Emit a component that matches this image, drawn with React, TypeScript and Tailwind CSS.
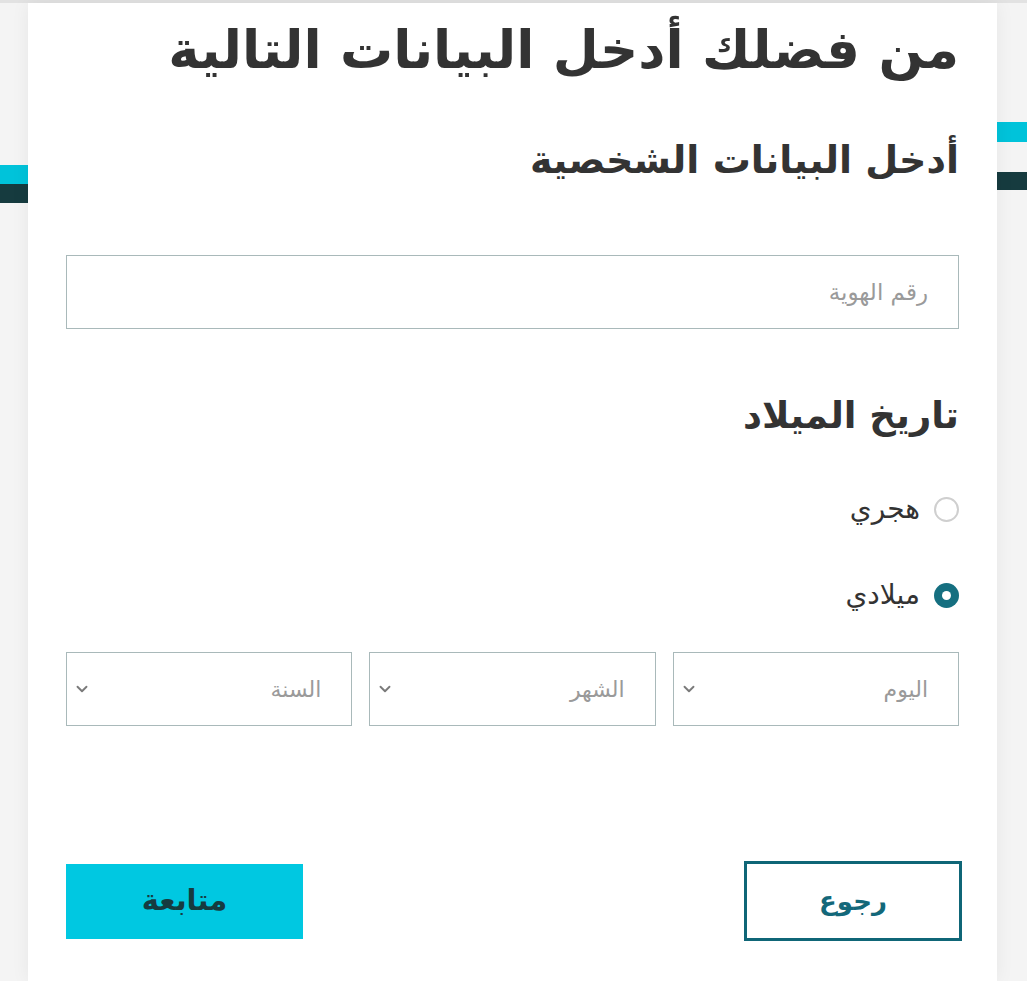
import { ChevronDown } from 'lucide-react';

const font = { fontFamily: '"DejaVu Sans", "Noto Sans", sans-serif' };

function DateSelect({ label }: { label: string }) {
  return (
    <div className="relative h-[74px] flex-1 border border-[#a9b9ba] bg-white">
      <div className="flex h-full items-center justify-between pl-[6px] pr-[30px]">
        <span className="text-[22px] text-[#9a9a9a]">{label}</span>
        <ChevronDown size={18} strokeWidth={2.5} className="text-[#7a7a7a]" />
      </div>
    </div>
  );
}

function Radio({ label, checked }: { label: string; checked?: boolean }) {
  return (
    <label className="flex h-[36px] items-center gap-[14px]">
      {checked ? (
        <span className="flex h-[25px] w-[25px] items-center justify-center rounded-full bg-[#156f80]">
          <span className="h-[9px] w-[9px] rounded-full bg-white" />
        </span>
      ) : (
        <span className="h-[25px] w-[25px] rounded-full border-2 border-[#cfcfcf] bg-white" />
      )}
      <span className="text-[28px] leading-none text-[#333]">{label}</span>
    </label>
  );
}

export default function App() {
  return (
    <div className="relative min-h-[981px] w-full overflow-hidden bg-[#f4f4f4]" style={font}>
      {/* top rule */}
      <div className="h-[3px] w-full bg-[#e2e2e2]" />

      {/* decorative bars behind the card */}
      <div className="absolute left-0 top-[165px] h-[19px] w-[28px] bg-[#00c3da]" />
      <div className="absolute left-0 top-[184px] h-[19px] w-[28px] bg-[#163b3f]" />
      <div className="absolute right-0 top-[122px] h-[20px] w-[30px] bg-[#00c3da]" />
      <div className="absolute right-0 top-[172px] h-[18px] w-[30px] bg-[#163b3f]" />

      <div
        dir="rtl"
        className="relative mx-[28px] min-h-[978px] w-[969px] bg-white px-[38px] shadow-[0_0_18px_rgba(0,0,0,0.06)]"
      >
        <h1 className="pt-[14px] text-[53px] font-bold leading-[66px] text-[#333]">
          من فضلك أدخل البيانات التالية
        </h1>

        <h2 className="mt-[52px] text-[38px] font-semibold leading-[50px] text-[#333]">
          أدخل البيانات الشخصية
        </h2>

        <div className="mt-[70px] flex h-[74px] items-center border border-[#a9b9ba] px-[30px]">
          <span className="text-[23px] text-[#9a9a9a]">رقم الهوية</span>
        </div>

        <h2 className="mt-[62px] text-[37px] font-semibold leading-[50px] text-[#333]">
          تاريخ الميلاد
        </h2>

        <div className="mt-[50px] flex flex-col gap-[50px]">
          <Radio label="هجري" />
          <Radio label="ميلادي" checked />
        </div>

        <div className="mt-[39px] flex gap-[17px]">
          <DateSelect label="اليوم" />
          <DateSelect label="الشهر" />
          <DateSelect label="السنة" />
        </div>

        <div className="mt-[135px] flex items-center justify-between">
          <button className="-mr-[3px] flex h-[80px] w-[218px] items-center justify-center border-[3px] border-[#0f6677] bg-white text-[26px] font-semibold text-[#13687a]">
            رجوع
          </button>
          <button className="flex h-[75px] w-[237px] items-center justify-center bg-[#00c8e1] text-[29px] font-bold text-[#163b3f]">
            متابعة
          </button>
        </div>
      </div>
    </div>
  );
}
